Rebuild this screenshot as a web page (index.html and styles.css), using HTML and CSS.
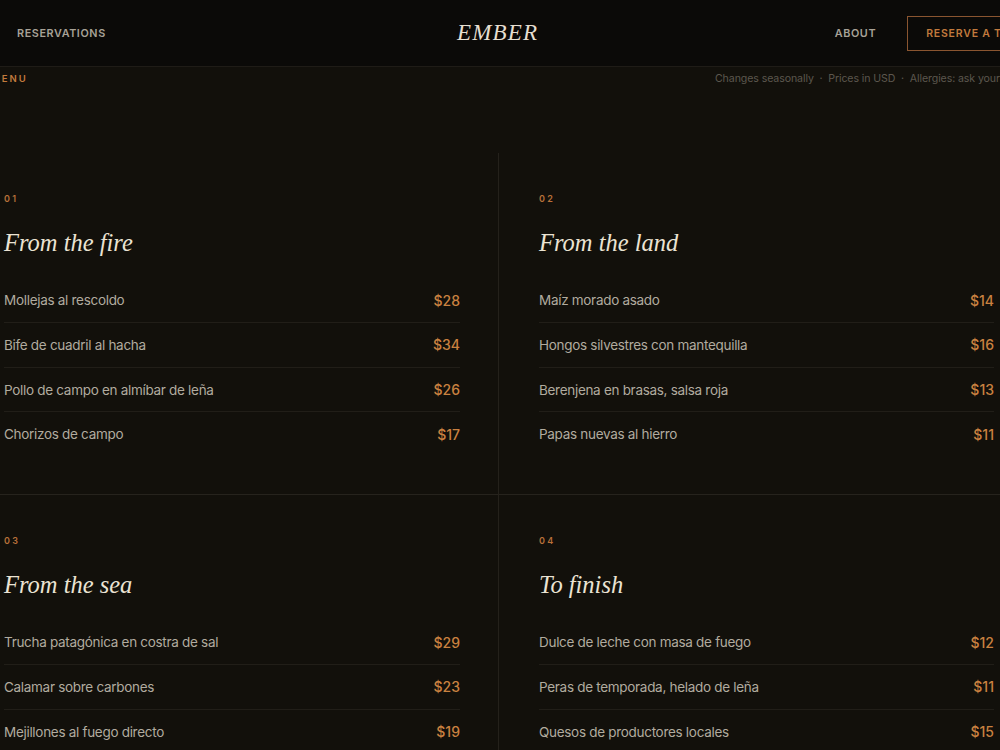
FILE: index.html
```html
<!DOCTYPE html>
<html lang="en">
<head>
  <meta charset="UTF-8">
  <meta name="viewport" content="width=device-width, initial-scale=1.0">
  <title>Ember — Menu</title>
  <link rel="stylesheet" href="styles.css">
</head>
<body>
  <header class="site-header">
    <nav class="nav-left">
      <a href="#" class="nav-link">Reservations</a>
    </nav>
    <a href="#" class="logo">EMBER</a>
    <nav class="nav-right">
      <a href="#" class="nav-link">About</a>
      <a href="#" class="btn-reserve">Reserve a table</a>
    </nav>
  </header>

  <!-- Barra de menu -->
  <div class="menu-bar">
    <span class="menu-bar-title">Menu</span>
    <span class="menu-bar-notes">Changes seasonally &nbsp;·&nbsp; Prices in USD &nbsp;·&nbsp; Allergies: ask your server</span>
  </div>

  <main class="menu-grid">
    <section class="course">
      <span class="course-num">01</span>
      <h2 class="course-title">From the fire</h2>
      <ul class="dishes">
        <li class="dish"><span class="dish-name">Mollejas al rescoldo</span><span class="dish-price">$28</span></li>
        <li class="dish"><span class="dish-name">Bife de cuadril al hacha</span><span class="dish-price">$34</span></li>
        <li class="dish"><span class="dish-name">Pollo de campo en almíbar de leña</span><span class="dish-price">$26</span></li>
        <li class="dish"><span class="dish-name">Chorizos de campo</span><span class="dish-price">$17</span></li>
      </ul>
    </section>

    <section class="course">
      <span class="course-num">02</span>
      <h2 class="course-title">From the land</h2>
      <ul class="dishes">
        <li class="dish"><span class="dish-name">Maíz morado asado</span><span class="dish-price">$14</span></li>
        <li class="dish"><span class="dish-name">Hongos silvestres con mantequilla</span><span class="dish-price">$16</span></li>
        <li class="dish"><span class="dish-name">Berenjena en brasas, salsa roja</span><span class="dish-price">$13</span></li>
        <li class="dish"><span class="dish-name">Papas nuevas al hierro</span><span class="dish-price">$11</span></li>
      </ul>
    </section>

    <section class="course">
      <span class="course-num">03</span>
      <h2 class="course-title">From the sea</h2>
      <ul class="dishes">
        <li class="dish"><span class="dish-name">Trucha patagónica en costra de sal</span><span class="dish-price">$29</span></li>
        <li class="dish"><span class="dish-name">Calamar sobre carbones</span><span class="dish-price">$23</span></li>
        <li class="dish"><span class="dish-name">Mejillones al fuego directo</span><span class="dish-price">$19</span></li>
        <li class="dish"><span class="dish-name">Pulpo a la plancha</span><span class="dish-price">$27</span></li>
      </ul>
    </section>

    <section class="course">
      <span class="course-num">04</span>
      <h2 class="course-title">To finish</h2>
      <ul class="dishes">
        <li class="dish"><span class="dish-name">Dulce de leche con masa de fuego</span><span class="dish-price">$12</span></li>
        <li class="dish"><span class="dish-name">Peras de temporada, helado de leña</span><span class="dish-price">$11</span></li>
        <li class="dish"><span class="dish-name">Quesos de productores locales</span><span class="dish-price">$15</span></li>
        <li class="dish"><span class="dish-name">Flan de la casa</span><span class="dish-price">$10</span></li>
      </ul>
    </section>
  </main>
</body>
</html>
```

FILE: styles.css
```css
body {
  font-family: 'Inter', 'Liberation Sans', sans-serif;
  background-color: #12100b;
  color: #b5afa3;
  margin: 0;
  padding: 0;
  overflow-x: hidden;
}

a {
  text-decoration: none;
  color: inherit;
}

/* Cabecera */
.site-header {
  display: grid;
  grid-template-columns: 440px auto 1fr;
  align-items: center;
  width: 1050px;
  height: 67px;
  padding-left: 17px;
  box-sizing: border-box;
  background: #0b0a08;
  border-bottom: 1px solid #1f1c17;
}

.nav-left,
.nav-right {
  display: flex;
  align-items: center;
}

.nav-right {
  justify-content: flex-end;
  gap: 31px;
}

.nav-link {
  font-size: 10.8px;
  font-weight: 600;
  letter-spacing: 0.6px;
  text-transform: uppercase;
  color: #a8a297;
}

.logo {
  font-family: 'Liberation Serif', serif;
  font-style: italic;
  font-size: 23px;
  letter-spacing: 1.2px;
  color: #e6dfd1;
}

.btn-reserve {
  display: inline-block;
  padding: 10px 18px;
  border: 1px solid #8a5530;
  font-size: 10.5px;
  font-weight: 600;
  letter-spacing: 0.8px;
  text-transform: uppercase;
  color: #c27a3d;
}

/* Barra de menu */
.menu-bar {
  display: flex;
  justify-content: space-between;
  align-items: center;
  width: 1070px;
  margin-left: calc(50% - 536px);
  height: 22px;
  padding-left: 27px;
  box-sizing: border-box;
}

.menu-bar-title {
  font-size: 9.5px;
  font-weight: 600;
  letter-spacing: 2px;
  text-transform: uppercase;
  color: #c27a3d;
}

.menu-bar-notes {
  font-size: 10.6px;
  letter-spacing: -0.1px;
  color: #5c574e;
  white-space: nowrap;
}

/* Carta */
.menu-grid {
  display: grid;
  grid-template-columns: 1fr 1fr;
  width: 1070px;
  margin-left: calc(50% - 536px);
  margin-top: 64px;
}

.course {
  padding: 40px 40px 38px;
}

.course:nth-child(odd) {
  border-right: 1px solid #24211b;
  padding-right: 38px;
}

.course:nth-child(-n+2) {
  border-bottom: 1px solid #26231d;
}

.course-num {
  display: block;
  font-size: 9px;
  font-weight: 600;
  letter-spacing: 2.2px;
  line-height: 12px;
  color: #b8703a;
}

.course-title {
  margin: 21px 0 18px;
  font-family: 'Liberation Serif', serif;
  font-style: italic;
  font-weight: normal;
  font-size: 24.5px;
  line-height: 34px;
  color: #ebe3d3;
}

.dishes {
  list-style: none;
  margin: 0;
  padding: 0;
}

.dish {
  display: flex;
  justify-content: space-between;
  align-items: center;
  height: 44px;
  box-sizing: border-box;
}

.dish + .dish {
  border-top: 1px solid #211e18;
  height: 44.7px;
}

.dish-name {
  font-size: 13.5px;
  letter-spacing: -0.3px;
  color: #b1ab9f;
}

.dish-price {
  font-size: 14px;
  font-weight: 500;
  color: #c98140;
}
```
